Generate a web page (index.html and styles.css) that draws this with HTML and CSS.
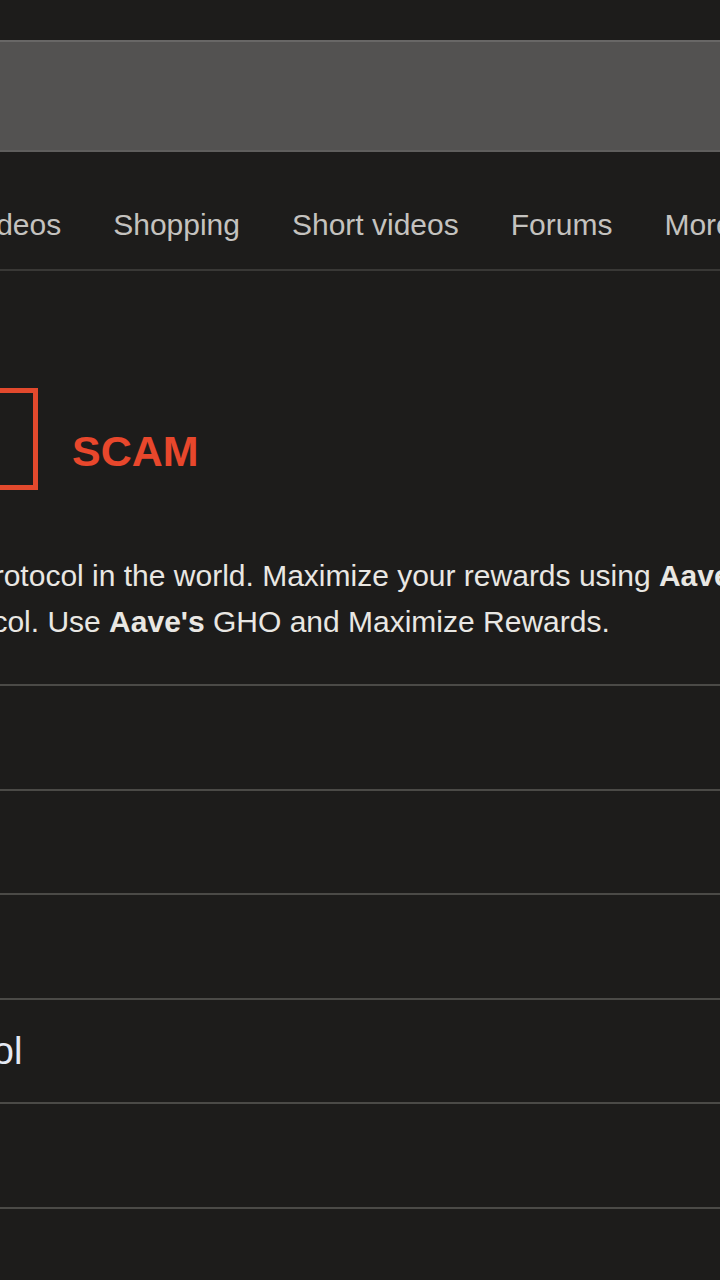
FILE: index.html
```html
<!DOCTYPE html>
<html lang="en">
<head>
  <meta charset="UTF-8" />
  <meta name="viewport" content="width=device-width, initial-scale=1.0"/>
  <title>Search results</title>
  <link rel="stylesheet" href="styles.css">
</head>
<body>

  <div class="search-bar"></div>

  <nav class="tabs">
    <a href="#">Videos</a>
    <a href="#">Shopping</a>
    <a href="#">Short videos</a>
    <a href="#">Forums</a>
    <a href="#">More</a>
  </nav>

  <div class="result">
    <div class="brand">
      <div class="logo-box"></div>
      <span class="scam">SCAM</span>
    </div>

    <p class="snippet">
      <span class="line line-1">protocol in the world. Maximize your rewards using <b>Aave's</b></span>
      <span class="line line-2">protocol. Use <b>Aave's</b> GHO and Maximize Rewards.</span>
    </p>
  </div>

  <div class="rows">
    <div class="row"></div>
    <div class="row"></div>
    <div class="row"></div>
    <div class="row"><a href="#" class="row-link">Protocol</a></div>
    <div class="row"></div>
    <div class="row"></div>
  </div>

</body>
</html>
```

FILE: styles.css
```css
body {
  font-family: 'Liberation Sans', Arial, sans-serif;
  margin: 0;
  padding: 0;
  background: #1d1c1b;
  width: 720px;
  height: 1280px;
  overflow: hidden;
}

.search-bar {
  margin-top: 40px;
  height: 108px;
  background: #535251;
  border-top: 2px solid #686766;
  border-bottom: 2px solid #5f5e5d;
}

.tabs {
  display: flex;
  gap: 52px;
  margin-left: -30px;
  padding: 56px 0 27px;
  border-bottom: 2px solid #393836;
  white-space: nowrap;
}

.tabs a {
  color: #c4c2bf;
  text-decoration: none;
  font-size: 30px;
  line-height: 34px;
}

.result {
  padding-top: 117px;
}

.brand {
  display: flex;
  align-items: flex-start;
  gap: 34px;
  margin-left: -62px;
}

.logo-box {
  width: 90px;
  height: 92px;
  border: 5px solid #e2492d;
  flex-shrink: 0;
}

.scam {
  color: #e8472c;
  font-size: 43px;
  font-weight: bold;
  margin-top: 39px;
}

.snippet {
  margin: 63px 0 0;
  color: #e9e7e3;
  font-size: 30px;
  line-height: 46px;
  white-space: nowrap;
}

.snippet .line {
  display: block;
}

.line-1 {
  margin-left: -23px;
}

.line-2 {
  margin-left: -76px;
}

.rows {
  margin-top: 39px;
}

.row {
  height: 102.6px;
  border-top: 2px solid #4b4a47;
  box-sizing: content-box;
}

.row-link {
  display: block;
  margin-left: -117px;
  padding-top: 29px;
  color: #e4e9f4;
  font-size: 38px;
  line-height: 44px;
  text-decoration: none;
  white-space: nowrap;
}
```
